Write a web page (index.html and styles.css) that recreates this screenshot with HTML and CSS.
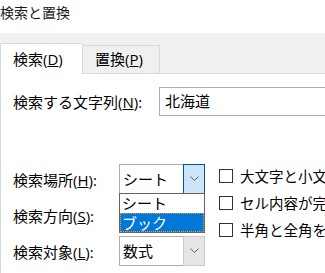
FILE: index.html
```html
<!DOCTYPE html>
<html lang="ja">
<head>
    <meta charset="UTF-8">
    <title>検索と置換</title>
    <link rel="stylesheet" href="styles.css">
</head>
<body>
    <div class="dialog">
        <div class="dialog-title">検索と置換</div>

        <div class="tab-strip">
            <div class="tab active">検索(<u>D</u>)</div>
            <div class="tab">置換(<u>P</u>)</div>
        </div>

        <div class="panel">
            <div class="find-row">
                <span class="find-label">検索する文字列(<u>N</u>):</span>
                <div class="text-box">北海道</div>
            </div>

            <div class="options">
                <div class="combo-col">
                    <div class="combo-row">
                        <span class="combo-label">検索場所(<u>H</u>):</span>
                        <div class="combo-wrap">
                            <div class="combo open">
                                <span class="combo-value">シート</span>
                                <span class="combo-btn">
                                    <svg width="9" height="6" viewBox="0 0 9 6"><path d="M0.5 0.5 L4.5 4.5 L8.5 0.5" fill="none" stroke="#606060" stroke-width="1"/></svg>
                                </span>
                            </div>
                            <ul class="combo-list">
                                <li>シート</li>
                                <li class="selected">ブック</li>
                            </ul>
                        </div>
                    </div>
                    <div class="combo-row">
                        <span class="combo-label">検索方向(<u>S</u>):</span>
                        <div class="combo">
                            <span class="combo-value"></span>
                            <span class="combo-btn">
                                <svg width="9" height="6" viewBox="0 0 9 6"><path d="M0.5 0.5 L4.5 4.5 L8.5 0.5" fill="none" stroke="#606060" stroke-width="1"/></svg>
                            </span>
                        </div>
                    </div>
                    <div class="combo-row">
                        <span class="combo-label">検索対象(<u>L</u>):</span>
                        <div class="combo">
                            <span class="combo-value">数式</span>
                            <span class="combo-btn">
                                <svg width="9" height="6" viewBox="0 0 9 6"><path d="M0.5 0.5 L4.5 4.5 L8.5 0.5" fill="none" stroke="#606060" stroke-width="1"/></svg>
                            </span>
                        </div>
                    </div>
                </div>

                <div class="check-col">
                    <label class="check-row"><span class="check-box"></span>大文字と小文字を区別する(<u>C</u>)</label>
                    <label class="check-row"><span class="check-box"></span>セル内容が完全に同一であるものを検索する(<u>O</u>)</label>
                    <label class="check-row"><span class="check-box"></span>半角と全角を区別する(<u>B</u>)</label>
                </div>
            </div>
        </div>
    </div>
</body>
</html>
```

FILE: styles.css
```css
* {
    margin: 0;
    padding: 0;
    box-sizing: border-box;
}

body {
    font-family: "Open Sans", "Noto Sans CJK JP", sans-serif;
    font-size: 15px;
    color: #000;
    background: #fff;
    width: 325px;
    height: 273px;
    overflow: hidden;
}

.dialog {
    width: 325px;
    height: 273px;
    overflow: hidden;
}

.dialog-title {
    height: 33px;
    line-height: 26px;
    font-size: 14px;
    color: #1a1a1a;
}

.tab-strip {
    height: 41px;
    background: #f0f0f0;
    border-bottom: 1px solid #d9d9d9;
    display: flex;
    align-items: flex-end;
    white-space: nowrap;
}

.tab {
    height: 28px;
    line-height: 26px;
    padding: 0 12px;
    width: 77px;
    border: 1px solid #d9d9d9;
    border-bottom: none;
    border-left: none;
    background: #f0f0f0;
}

.tab.active {
    width: 83px;
    height: 31px;
    line-height: 30px;
    margin-bottom: -1px;
    background: #fff;
    border-left: 1px solid #d9d9d9;
    padding-left: 12px;
}

.panel {
    height: 200px;
    border-left: 1px solid #d9d9d9;
    padding: 13px 0 0 12px;
    white-space: nowrap;
}

.find-row {
    display: flex;
    align-items: center;
    height: 29px;
}

.find-label {
    width: 146px;
    flex-shrink: 0;
}

.text-box {
    width: 200px;
    flex-shrink: 0;
    height: 29px;
    line-height: 27px;
    border: 1px solid #adadad;
    padding-left: 5px;
}

.options {
    display: flex;
    margin-top: 48px;
}

.combo-col {
    display: flex;
    flex-direction: column;
    gap: 6px;
}

.combo-row {
    display: flex;
    align-items: center;
    height: 30px;
}

.combo-label {
    width: 106px;
    flex-shrink: 0;
}

.combo-wrap {
    position: relative;
}

.combo {
    width: 86px;
    height: 30px;
    border: 1px solid #adadad;
    display: flex;
    align-items: stretch;
    background: #fff;
}

.combo-value {
    flex: 1;
    line-height: 28px;
    padding-left: 3px;
}

.combo-btn {
    width: 22px;
    margin: -1px -1px -1px 0;
    background: #e5e5e5;
    border: 1px solid #cccccc;
    display: flex;
    align-items: center;
    justify-content: center;
}

.combo.open .combo-btn {
    background: #cce4f7;
    border-color: #005499;
}

.combo-list {
    position: absolute;
    top: 29px;
    left: 0;
    width: 86px;
    height: 40px;
    list-style: none;
    background: #fff;
    border: 1px solid #646464;
    z-index: 2;
}

.combo-list li {
    height: 19px;
    line-height: 18px;
    padding-left: 2px;
}

.combo-list li.selected {
    background: #0078d7;
    color: #fff;
    border: 1px dotted #f39c3c;
    padding-left: 1px;
}

.check-col {
    display: flex;
    flex-direction: column;
    margin-left: 14px;
    margin-top: -2px;
    font-size: 14.5px;
}

.check-row {
    display: flex;
    align-items: center;
    height: 27px;
}

.check-box {
    width: 14px;
    height: 14px;
    border: 1px solid #333;
    background: #fff;
    margin-right: 7px;
    flex-shrink: 0;
}
```
